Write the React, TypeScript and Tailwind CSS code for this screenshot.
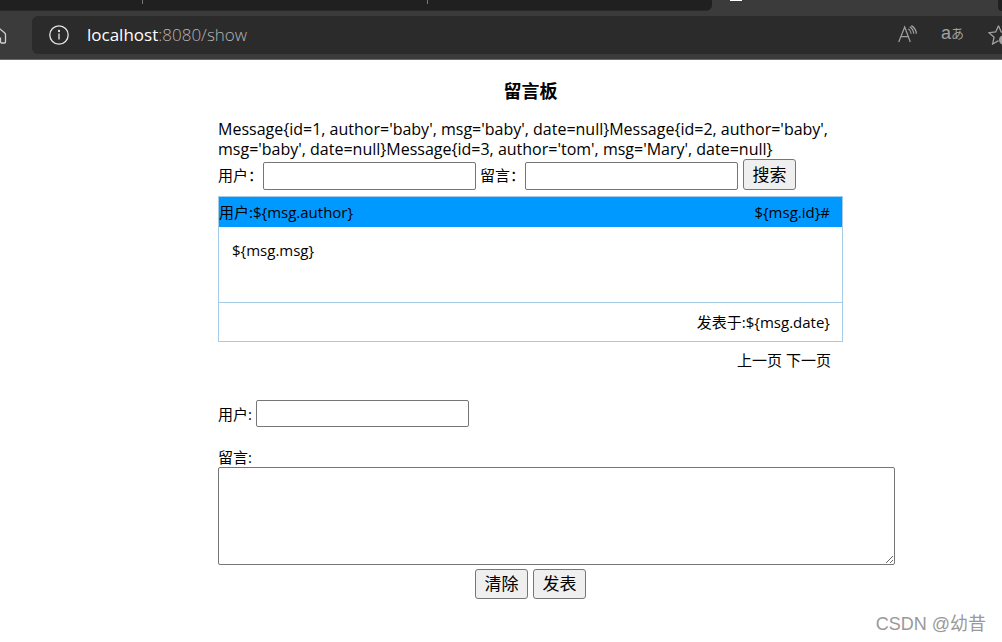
import React from "react";

const fieldClass =
  "w-[213px] rounded-xs border border-[#767676] bg-white px-1 text-base";
const buttonClass =
  "w-[53px] rounded-[3px] border border-[#767676] bg-[#efefef] text-[17px] leading-7";

function BrowserBar() {
  return (
    <header className="overflow-hidden border-b border-[#6a6a6a] bg-[#3b3b3b]">
      <div className="flex h-[11px] items-start">
        <div className="flex h-full w-[712px] items-start rounded-br-md border-b border-[#2a2a2a] bg-[#202020]">
          <span className="ml-[142px] h-1 w-px bg-[#777]" />
          <span className="ml-[284px] h-1 w-px bg-[#777]" />
        </div>
        <span className="ml-[18px] h-px w-3 bg-white" />
        <div className="ml-auto h-full w-1 rounded-bl-md bg-[#202020]" />
      </div>
      <div className="flex pt-[5px] pb-[5px]">
        <a href="#home" aria-label="Home" className="flex w-8 shrink-0 items-center">
          <svg className="h-5 w-2" viewBox="0 0 8 20" fill="none" stroke="#d0d0d0" strokeWidth="1.3">
            <path d="M-3 1.5 L4.5 7.7 Q5.5 8.5 5.5 9.7 V17 Q5.5 18 4.5 18 H1.5 Q.5 18 .5 17 V12.5" />
          </svg>
        </a>
        <div className="flex h-[38px] grow items-center overflow-hidden rounded-l-md bg-[#2b2b2b] pl-[17px]">
          <svg className="h-5 w-5 shrink-0" viewBox="0 0 20 20" fill="none" stroke="#e6e6e6" strokeWidth="1.3">
            <circle cx="10" cy="10" r="9.2" />
            <path d="M10 8.5 V14.5" />
            <circle cx="10" cy="6" r=".5" fill="#e6e6e6" />
          </svg>
          <span className="ml-[18px] font-['Open_Sans','Noto_Sans',sans-serif] text-[17px] leading-6 font-light text-[#b4b4b4]">
            <span className="font-normal text-white">localhost</span>:8080/show
          </span>
          <div className="-mr-2 ml-auto flex shrink-0 items-center text-[#a0a0a0]">
            <svg className="h-5 w-5" viewBox="0 0 20 20" fill="none" stroke="currentColor" strokeWidth="1.2">
              <path d="M1.7 17 L7.7 2 L13.3 17 M3.7 11.7 H11.4 M11.3 3.7 Q13.8 5.3 14.2 8.7 M12.7 1.8 Q16.3 4 16.8 8.7 M14.3 .6 Q19 3.2 19.4 8.7" />
            </svg>
            <span className="mr-6 ml-6 flex items-center pb-1">
              <span className="font-['Liberation_Sans',sans-serif] text-[18px] leading-5">a</span>
              <span className="font-['Noto_Sans_CJK_JP',sans-serif] text-[13px] leading-5">あ</span>
            </span>
            <svg className="h-5 w-[22px]" viewBox="0 0 22 20" fill="none" stroke="currentColor" strokeWidth="1.3">
              <path d="M10.5 .8 L13.2 7 L20 7.7 M10.5 .8 L7.7 7 L1 7.7 L6.1 12.2 L4.6 19 L10.5 15.6" />
              <circle cx="16" cy="15" r="5" fill="currentColor" stroke="none" />
            </svg>
          </div>
        </div>
      </div>
    </header>
  );
}

export default function App() {
  return (
    <div className="relative min-h-screen overflow-x-hidden bg-white font-['Open_Sans','Noto_Sans_CJK_SC',sans-serif] text-[15px] leading-5 text-black">
      <BrowserBar />
      <main className="pl-[59px]">
        <div className="mx-auto max-w-[625px]">
          <h1 className="pt-[19px] text-center text-[18px] leading-6 font-bold">留言板</h1>
          <p className="mt-4 text-base leading-5">
            {"Message{id=1, author='baby', msg='baby', date=null}Message{id=2, author='baby', msg='baby', date=null}Message{id=3, author='tom', msg='Mary', date=null}"}
          </p>
          <form className="flex items-end" onSubmit={(e) => e.preventDefault()}>
            <label htmlFor="search-user" className="w-[45px] pb-[5px] whitespace-nowrap">用户：</label>
            <input id="search-user" className={`${fieldClass} h-7`} />
            <label htmlFor="search-msg" className="ml-1 w-[45px] pb-[5px] whitespace-nowrap">留言：</label>
            <input id="search-msg" className={`${fieldClass} h-7`} />
            <button type="submit" className={`${buttonClass} ml-[5px] h-[31px]`}>搜索</button>
          </form>

          <table className="mt-[6px] w-full border-collapse border border-[#a5cbe6]">
            <tbody>
              <tr className="h-[30px] bg-[#0099ff]">
                <td>{"用户:${msg.author}"}</td>
                <td className="pr-3 text-right">{"${msg.id}#"}</td>
              </tr>
              <tr className="h-[76px]">
                <td colSpan={2} className="px-[13px] pt-[13px] align-top">{"${msg.msg}"}</td>
              </tr>
              <tr className="h-[39px] border-t border-[#a5cbe6]">
                <td colSpan={2} className="pr-3 text-right">{"发表于:${msg.date}"}</td>
              </tr>
            </tbody>
          </table>
          <nav className="mt-2 flex justify-end gap-1 pr-3">
            <a href="#prev">上一页</a>
            <a href="#next">下一页</a>
          </nav>

          <form className="mt-[30px]" onSubmit={(e) => e.preventDefault()}>
            <div className="flex items-center gap-1">
              <label htmlFor="post-user">用户:</label>
              <input id="post-user" className={`${fieldClass} h-[27px]`} />
            </div>
            <label htmlFor="post-msg" className="mt-5 block">留言:</label>
            <textarea
              id="post-msg"
              className="block h-[98px] w-[677px] resize rounded-xs border border-[#767676] bg-white p-1"
            />
            <div className="mt-1 flex justify-center gap-[5px]">
              <button type="reset" className={buttonClass}>清除</button>
              <button type="submit" className={buttonClass}>发表</button>
            </div>
          </form>
        </div>
      </main>
      <div className="absolute right-4 bottom-1 font-['Liberation_Sans','Noto_Sans_CJK_SC',sans-serif] text-[18px] leading-7 text-[#999]">
        CSDN @幼昔
      </div>
    </div>
  );
}
